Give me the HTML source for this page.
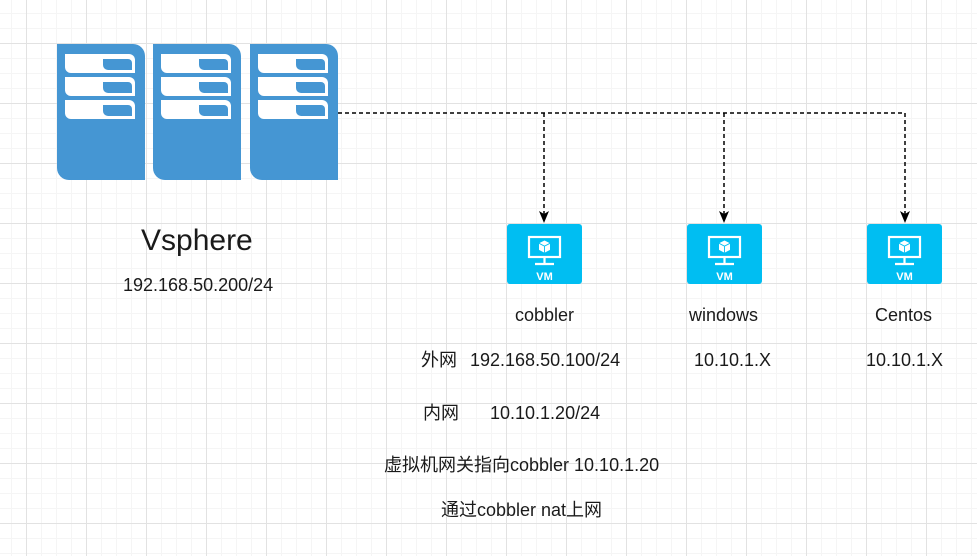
<!DOCTYPE html>
<html><head><meta charset="utf-8"><style>
html,body{margin:0;padding:0}
body{width:977px;height:556px;overflow:hidden;position:relative;background:#fff;
background-image:
linear-gradient(to right,#e2e2e2 1px,transparent 1px),
linear-gradient(to bottom,#e2e2e2 1px,transparent 1px),
linear-gradient(to right,#f5f5f5 1px,transparent 1px),
linear-gradient(to bottom,#f5f5f5 1px,transparent 1px);
background-size:60px 60px,60px 60px,15px 15px,15px 15px;
background-position:26px 43px,26px 43px,11px 13px,11px 13px;
font-family:"Liberation Sans","Noto Sans CJK SC",sans-serif;color:#1a1a1a}
.t{position:absolute;font-size:18px;white-space:nowrap;line-height:1}
</style></head><body>
<svg width="977" height="556" style="position:absolute;left:0;top:0">
<defs>
<g id="srv">
<path d="M0 0H76a12 12 0 0 1 12 12V136H12a12 12 0 0 1 -12 -12Z" fill="#4596d3"/>
<g fill="#fff">
<path d="M8 10H72a6 6 0 0 1 6 6V29H14a6 6 0 0 1 -6 -6Z"/>
<path d="M8 33H72a6 6 0 0 1 6 6V52H14a6 6 0 0 1 -6 -6Z"/>
<path d="M8 56H72a6 6 0 0 1 6 6V75H14a6 6 0 0 1 -6 -6Z"/>
</g>
<g fill="#4596d3">
<path d="M46 15H71a4 4 0 0 1 4 4V26H51a5 5 0 0 1 -5 -5Z"/>
<path d="M46 38H71a4 4 0 0 1 4 4V49H51a5 5 0 0 1 -5 -5Z"/>
<path d="M46 61H71a4 4 0 0 1 4 4V72H51a5 5 0 0 1 -5 -5Z"/>
</g>
</g>
<g id="vm">
<rect x="0" y="0" width="75" height="60" rx="3" fill="#00bef2"/>
<rect x="22" y="13" width="31" height="20" fill="none" stroke="#fff" stroke-width="2.2"/>
<path d="M37.5 34v5M28 40h19" stroke="#fff" stroke-width="2.2"/>
<path d="M37.5 16.5l5.5 2.8v6.6l-5.5 2.8l-5.5-2.8v-6.6Z" fill="#fff"/>
<path d="M32 19.3l5.5 2.8l5.5-2.8M37.5 22.1v6.6" stroke="#00bef2" stroke-width="0.9" fill="none"/>
<text x="37.5" y="56" font-size="11" font-weight="bold" fill="#fff" text-anchor="middle" font-family="Liberation Sans,sans-serif">VM</text>
</g>
</defs>
<use href="#srv" x="57" y="44"/>
<use href="#srv" x="153" y="44"/>
<use href="#srv" x="250" y="44"/>
<g stroke="#000" stroke-width="1.5" stroke-dasharray="4 3" fill="none">
<path d="M338 113H905"/>
<path d="M544 113V214"/>
<path d="M724 113V214"/>
<path d="M905 113V214"/>
</g>
<g fill="#000">
<path d="M539 211l5 12l5-12l-5 3Z"/>
<path d="M719 211l5 12l5-12l-5 3Z"/>
<path d="M900 211l5 12l5-12l-5 3Z"/>
</g>
<use href="#vm" x="507" y="224"/>
<use href="#vm" x="687" y="224"/>
<use href="#vm" x="867" y="224"/>
</svg>
<div class="t" style="left:141px;top:226px;font-size:30px">Vsphere</div>
<div class="t" style="left:123px;top:276px">192.168.50.200/24</div>
<div class="t" style="left:515px;top:306px">cobbler</div>
<div class="t" style="left:689px;top:306px">windows</div>
<div class="t" style="left:875px;top:306px">Centos</div>
<div class="t" style="left:421px;top:351px">外网</div>
<div class="t" style="left:470px;top:351px">192.168.50.100/24</div>
<div class="t" style="left:694px;top:351px">10.10.1.X</div>
<div class="t" style="left:866px;top:351px">10.10.1.X</div>
<div class="t" style="left:423px;top:404px">内网</div>
<div class="t" style="left:490px;top:404px">10.10.1.20/24</div>
<div class="t" style="left:384px;top:456px">虚拟机网关指向cobbler 10.10.1.20</div>
<div class="t" style="left:441px;top:501px">通过cobbler nat上网</div>
</body></html>
